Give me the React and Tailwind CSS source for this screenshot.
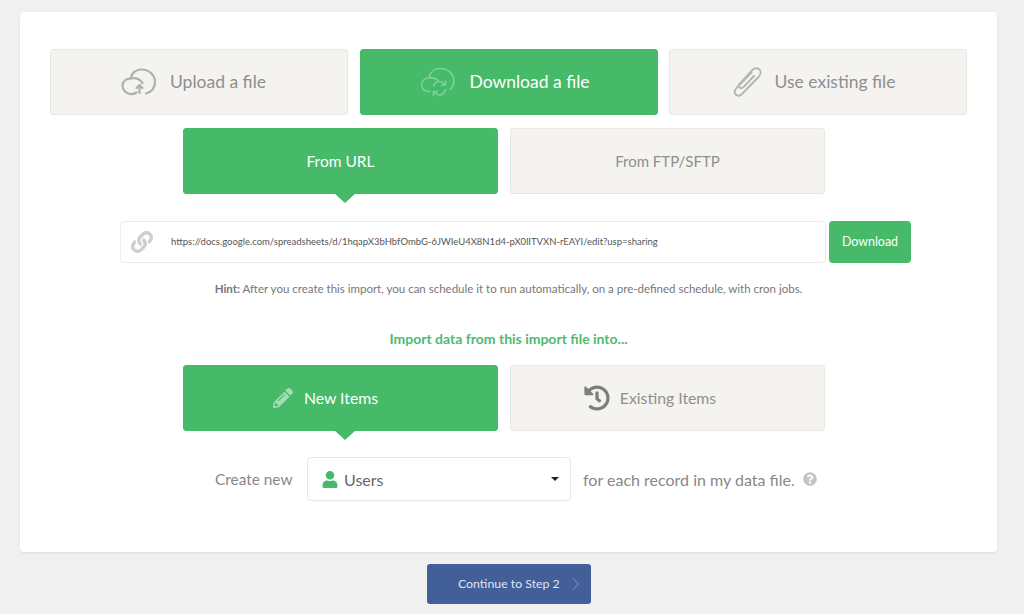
import React from "react";
import { FaHistory, FaLink, FaPencilAlt, FaQuestionCircle, FaUser } from "react-icons/fa";
import { ChevronRight } from "lucide-react";

const CloudUp = () => (
  <svg width="36" height="28" viewBox="0 0 36 28" fill="none" stroke="#b0b0b0" strokeWidth="2.2" strokeLinecap="round" strokeLinejoin="round">
    <path d="M15.5 24.5C13.5 26 11.5 26.5 9 26C4.5 25 1.5 21.5 1.5 18C1.5 13.5 5 10.5 9.5 10.5C10.5 5 15 1.5 20.5 1.5C28 1.5 34 7 34 13.5C34 19.5 30.5 24 25 25.5" />
    <path d="M9.5 10.5C15 9.5 19 11.5 21.5 15" />
    <path d="M18.5 25V17M15.5 20L18.5 17L21.5 20" />
  </svg>
);

const CloudSync = () => (
  <svg width="36" height="30" viewBox="0 0 36 30" fill="none" stroke="#7fd19b" strokeWidth="1.6" strokeLinecap="round" strokeLinejoin="round">
    <path d="M10 24.5H8.5C4.5 24.5 1.5 21.5 1.5 18C1.5 14 4.5 11 9 11C10 5 14.5 1.5 20 1.5C27.5 1.5 34 7 34 14C34 17.5 32.5 20.5 30 22.5" />
    <path d="M9 11C13 10.5 16 11.5 18 13.5" />
    <path d="M13.5 19C14.5 15.8 17 14.5 19.5 14.5C21.5 14.5 23 15.5 24 17M25.5 14V18H21.5" />
    <path d="M25.5 22.5C24.5 26 22 28 19.5 28C17.5 28 16 27 15 25.5M13.5 28.5V24.5H17.5" />
  </svg>
);

const Clip = () => (
  <svg width="29" height="30" viewBox="0 0 29 30" fill="none" stroke="#b5b5b5" strokeWidth="1.9" strokeLinecap="round" strokeLinejoin="round">
    <path d="M18.5 5.5L3.5 21C1 24 1.5 26.5 3 27.8C4.5 29 7 29 9.5 26.5L25.5 10C28.5 6.5 28 3.8 26.2 2.3C24 0.6 21 1 18.5 3.8L7 16.5C5.5 18.2 5.8 19.7 6.7 20.5C7.7 21.4 9.2 21.4 10.7 19.8L21 9" />
  </svg>
);

const Tab = ({ active, className, icon, label, arrow }) => (
  <div
    className={`relative flex h-[66px] items-center justify-center rounded-[3px] border ${className} ${
      active ? "border-[#46ba69] bg-[#46ba69] text-white" : "border-[#e9e7e3] bg-[#f4f3f0] text-[#8f8f8f]"
    }`}
  >
    {icon}
    <span>{label}</span>
    {arrow && (
      <span className="absolute left-1/2 top-full -ml-[7px] h-0 w-0 border-x-[11px] border-t-[10px] border-x-transparent border-t-[#46ba69]" />
    )}
  </div>
);

export default function App() {
  return (
    <div className="h-[614px] overflow-hidden bg-[#f0f0f0] pl-5 pt-3 font-['Lato',sans-serif] text-[#777]">
      <div className="flex h-[540px] w-[977px] flex-col items-start rounded-[4px] bg-white pt-[37px] shadow-[0_1px_2px_rgba(0,0,0,0.08)]">
        <div className="ml-[30px] flex gap-[11px] leading-[24px]">
          <Tab className="mr-px w-[298px] gap-[13px] pb-px pr-[11px] text-[17.5px]" label="Upload a file" icon={<CloudUp />} />
          <Tab className="w-[298px] gap-[13px] pb-px pr-2 text-[17.5px]" active label="Download a file" icon={<CloudSync />} />
          <Tab className="w-[298px] gap-[13px] pb-px pr-2 text-[17.5px]" label="Use existing file" icon={<Clip />} />
        </div>

        <div className="ml-[163px] mt-[13px] flex gap-3">
          <Tab className="w-[315px] pt-px text-[15.5px]" active arrow label="From URL" />
          <Tab className="w-[315px] text-[15px]" label="From FTP/SFTP" />
        </div>

        <div className="ml-[100px] mt-[27px] flex h-[42px] gap-[3px]">
          <div className="flex w-[706px] items-center rounded-[4px] border border-[#ececec] bg-white pl-[10px]">
            <FaLink className="h-[22px] w-[22px] text-[#cfcfcf]" />
            <span className="ml-[18px] text-[9.5px] text-[#555]">
              https://docs.google.com/spreadsheets/d/1hqapX3bHbfOmbG-6JWIeU4X8N1d4-pX0lITVXN-rEAYI/edit?usp=sharing
            </span>
          </div>
          <div className="flex w-[82px] items-center justify-center rounded-[4px] bg-[#46ba69] text-[12.4px] text-white">
            Download
          </div>
        </div>

        <p className="mt-[18px] w-full text-center text-[11.5px] leading-4 text-[#777]">
          <b className="font-bold">Hint:</b> After you create this import, you can schedule it to run automatically, on a pre-defined schedule, with cron jobs.
        </p>

        <p className="mt-[33px] w-full text-center text-[14px] font-bold leading-[18px] text-[#4dba72]">
          Import data from this import file into...
        </p>

        <div className="ml-[163px] mt-[17px] flex gap-3">
          <Tab className="w-[315px] gap-[11px] pr-[30px] text-[15.8px]" active arrow label="New Items" icon={<FaPencilAlt className="h-5 w-5 text-[#a3dfb5]" />} />
          <Tab className="w-[315px] gap-[10px] pr-[35px] text-[15.8px]" label="Existing Items" icon={<FaHistory className="h-[26px] w-[26px] text-[#7d7d7d]" />} />
        </div>

        <div className="ml-[195px] mt-[26px] flex items-center text-[16px] text-[#888]">
          <span className="w-[78px] whitespace-nowrap pt-px text-[15.4px]">Create new</span>
          <div className="ml-[14px] flex h-[44px] w-[264px] items-center rounded-[4px] border border-[#e6e6e6] bg-white pl-[14px] pr-[11px] text-[#666]">
            <FaUser className="h-[17px] w-[16px] text-[#46ba69]" />
            <span className="ml-[6px] flex-1 pt-px">Users</span>
            <span className="h-0 w-0 border-x-[4px] border-t-[4px] border-x-transparent border-t-[#222]" />
          </div>
          <span className="ml-[12px] pt-px">for each record in my data file.</span>
          <FaQuestionCircle className="ml-[8px] h-[14px] w-[14px] text-[#c4c4c4]" />
        </div>
      </div>

      <div className="relative ml-[407px] mt-3 flex h-[40px] w-[164px] items-center rounded-[3px] bg-[#425f9a] pl-[31px] text-[12.3px] text-[#dfe6f2]">
        Continue to Step 2
        <ChevronRight className="absolute right-[5px] h-5 w-5 text-[#6a84b3]" strokeWidth={1.5} />
      </div>
    </div>
  );
}
